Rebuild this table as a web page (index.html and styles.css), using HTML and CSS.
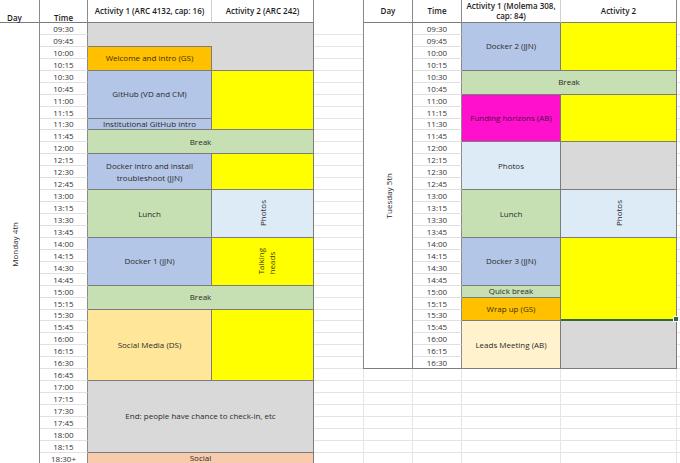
FILE: index.html
```html
<!DOCTYPE html>
<html lang="en">
<head>
<meta charset="utf-8">
<title>Workshop schedule</title>
<link rel="stylesheet" href="styles.css">
</head>
<body>
<div class="sheet">
  <div class="grid left">
    <div class="hd hd-day">Day</div>
    <div class="hd hd-time">Time</div>
    <div class="hd hd-act soft">Activity 1 (ARC 4132, cap: 16)</div>
    <div class="hd hd-act">Activity 2 (ARC 242)</div>

    <div class="day day-left"><span class="rot">Monday 4th</span></div>

    <div class="t">09:30</div>
    <div class="b gray r2 open-right"></div>
    <div class="b gray r4"></div>
    <div class="t">09:45</div>
    <div class="t">10:00</div>
    <div class="b orange r2">Welcome and intro (GS)</div>
    <div class="t">10:15</div>
    <div class="t">10:30</div>
    <div class="b blue r4">GitHub (VD and CM)</div>
    <div class="b yellow r5"></div>
    <div class="t">10:45</div>
    <div class="t">11:00</div>
    <div class="t">11:15</div>
    <div class="t">11:30</div>
    <div class="b blue">Institutional GitHub intro</div>
    <div class="t">11:45</div>
    <div class="b green r2 both">Break</div>
    <div class="t">12:00</div>
    <div class="t">12:15</div>
    <div class="b blue r3">Docker intro and install troubleshoot (JJN)</div>
    <div class="b yellow r3"></div>
    <div class="t">12:30</div>
    <div class="t">12:45</div>
    <div class="t">13:00</div>
    <div class="b green r4">Lunch</div>
    <div class="b sky r4"><span class="rot">Photos</span></div>
    <div class="t">13:15</div>
    <div class="t">13:30</div>
    <div class="t">13:45</div>
    <div class="t">14:00</div>
    <div class="b blue r4">Docker 1 (JJN)</div>
    <div class="b yellow r4 two-line"><span class="rot">Talking<br>heads</span></div>
    <div class="t">14:15</div>
    <div class="t">14:30</div>
    <div class="t">14:45</div>
    <div class="t">15:00</div>
    <div class="b green r2 both">Break</div>
    <div class="t">15:15</div>
    <div class="t">15:30</div>
    <div class="b peach r6">Social Media (DS)</div>
    <div class="b yellow r6"></div>
    <div class="t">15:45</div>
    <div class="t">16:00</div>
    <div class="t">16:15</div>
    <div class="t">16:30</div>
    <div class="t">16:45</div>
    <div class="t">17:00</div>
    <div class="b gray r6 both">End: people have chance to check-in, etc</div>
    <div class="t">17:15</div>
    <div class="t">17:30</div>
    <div class="t">17:45</div>
    <div class="t">18:00</div>
    <div class="t">18:15</div>
    <div class="t">18:30+</div>
    <div class="b salmon both">Social</div>
  </div>

  <div class="gap lines"></div>

  <div class="grid right">
    <div class="edge lines"></div>
    <div class="fill rows c1"></div>
    <div class="fill rows c2"></div>
    <div class="fill rows c3"></div>
    <div class="fill rows c4"></div>

    <div class="hd hd-c first">Day</div>
    <div class="hd hd-c">Time</div>
    <div class="hd hd-act soft">Activity 1 (Molema 308, cap: 84)</div>
    <div class="hd hd-act">Activity 2</div>

    <div class="day day-right"><span class="rot">Tuesday 5th</span></div>

    <div class="t">09:30</div>
    <div class="b blue r4">Docker 2 (JJN)</div>
    <div class="b yellow r4"></div>
    <div class="t">09:45</div>
    <div class="t">10:00</div>
    <div class="t">10:15</div>
    <div class="t">10:30</div>
    <div class="b green r2 both">Break</div>
    <div class="t">10:45</div>
    <div class="t">11:00</div>
    <div class="b magenta r4">Funding horizons (AB)</div>
    <div class="b yellow r4"></div>
    <div class="t">11:15</div>
    <div class="t">11:30</div>
    <div class="t">11:45</div>
    <div class="t">12:00</div>
    <div class="b sky r4">Photos</div>
    <div class="b gray r4"></div>
    <div class="t">12:15</div>
    <div class="t">12:30</div>
    <div class="t">12:45</div>
    <div class="t">13:00</div>
    <div class="b green r4">Lunch</div>
    <div class="b sky r4"><span class="rot">Photos</span></div>
    <div class="t">13:15</div>
    <div class="t">13:30</div>
    <div class="t">13:45</div>
    <div class="t">14:00</div>
    <div class="b blue r4">Docker 3 (JJN)</div>
    <div class="b yellow r7 sel"></div>
    <div class="t">14:15</div>
    <div class="t">14:30</div>
    <div class="t">14:45</div>
    <div class="t">15:00</div>
    <div class="b green">Quick break</div>
    <div class="t">15:15</div>
    <div class="b orange r2">Wrap up (GS)</div>
    <div class="t">15:30</div>
    <div class="t">15:45</div>
    <div class="b cream r4">Leads Meeting (AB)</div>
    <div class="b gray r4"></div>
    <div class="t">16:00</div>
    <div class="t">16:15</div>
    <div class="t last">16:30</div>
  </div>
</div>
</body>
</html>
```

FILE: styles.css
```css
* {
  box-sizing: border-box;
  margin: 0;
  padding: 0;
}

html, body {
  width: 680px;
  height: 463px;
  overflow: hidden;
  background: #ffffff;
}

body {
  font-family: "Open Sans", "Noto Sans", sans-serif;
  font-size: 8px;
  line-height: 11px;
  color: #2a2a2a;
}

.sheet {
  display: flex;
  height: 463px;
}

.grid {
  display: grid;
  grid-template-rows: 23px repeat(37, 11.94px);
  flex: none;
}

.left {
  width: 314px;
  grid-template-columns: 40px 48px 124px 102px;
}

.right {
  width: 317px;
  grid-template-columns: 50px 49px 99px 116px 3px;
}

.gap {
  width: 49px;
  flex: none;
}

/* spreadsheet gridlines for empty cells */
.lines {
  background:
    linear-gradient(#ffffff, #ffffff) 0 0 / 100% 23px no-repeat,
    repeating-linear-gradient(to bottom, transparent 0, transparent 10.94px, #e4e4e4 10.94px, #e4e4e4 11.94px) 0 23px / 100% 100%;
}

.rows {
  background: repeating-linear-gradient(to bottom, transparent 0, transparent 10.94px, #e4e4e4 10.94px, #e4e4e4 11.94px);
}

.edge {
  grid-column: 5;
  grid-row: 1 / -1;
}

.fill {
  grid-row: 31 / 39;
  border-right: 1px solid #e4e4e4;
}
.fill.c1 { grid-column: 1; border-left: 1px solid #e4e4e4; }
.fill.c2 { grid-column: 2; }
.fill.c3 { grid-column: 3; }
.fill.c4 { grid-column: 4; }

/* header row */
.hd {
  display: flex;
  align-items: center;
  justify-content: center;
  text-align: center;
  background: #ffffff;
  border-bottom: 1px solid #7c7c7c;
  border-right: 1px solid #8a8a8a;
  font-weight: 600;
  color: #1c1c1c;
  line-height: 10.5px;
}

.hd-day {
  align-items: flex-end;
  padding-right: 10px;
  line-height: 8px;
}

.hd-time {
  align-items: flex-end;
  line-height: 8px;
}

.hd-act {
  padding: 0 4px;
}

.hd.soft {
  border-right-color: #d0d0d0;
}

.hd-c.first {
  border-left: 1px solid #8a8a8a;
}

/* merged day cells */
.day {
  display: flex;
  align-items: center;
  justify-content: center;
  background: #ffffff;
  border-right: 1px solid #8a8a8a;
}

.day-left {
  grid-row: span 37;
  padding-right: 10px;
}

.day-right {
  grid-row: span 29;
  border-left: 1px solid #8a8a8a;
  border-bottom: 1px solid #7c7c7c;
}

/* time column */
.t {
  display: flex;
  align-items: center;
  justify-content: center;
  border-right: 1px solid #8a8a8a;
  border-bottom: 1px solid #e0e0e0;
  color: #333333;
}

.t.last {
  border-bottom-color: #7c7c7c;
}

/* activity blocks */
.b {
  display: flex;
  align-items: center;
  justify-content: center;
  text-align: center;
  padding: 0 4px;
  border-right: 1px solid #7c7c7c;
  border-bottom: 1px solid #7c7c7c;
  line-height: 12px;
}

.b.open-right {
  border-right: none;
}

.b.two-line {
  padding-left: 10px;
}

.r2 { grid-row: span 2; }
.r3 { grid-row: span 3; }
.r4 { grid-row: span 4; }
.r5 { grid-row: span 5; }
.r6 { grid-row: span 6; }
.r7 { grid-row: span 7; }
.both { grid-column: span 2; }

.gray    { background: #d9d9d9; }
.orange  { background: #ffc000; color: #3b3000; }
.blue    { background: #b4c6e7; }
.yellow  { background: #ffff00; color: #3d3d00; }
.green   { background: #c6e0b4; }
.sky     { background: #ddebf7; }
.peach   { background: #ffe699; }
.salmon  { background: #f8cbad; }
.magenta { background: #ff10cc; color: #4a0c3c; }
.cream   { background: #fff2cc; }

.rot {
  writing-mode: vertical-rl;
  transform: rotate(180deg);
  text-align: start;
  line-height: 11px;
}

/* active-cell selection edge */
.sel {
  position: relative;
  border-bottom: 2px solid #2f6b3a;
}

.sel::after {
  content: "";
  position: absolute;
  right: -3px;
  bottom: -3px;
  width: 4px;
  height: 4px;
  background: #2f6b3a;
  border: 1px solid #ffffff;
}
```
